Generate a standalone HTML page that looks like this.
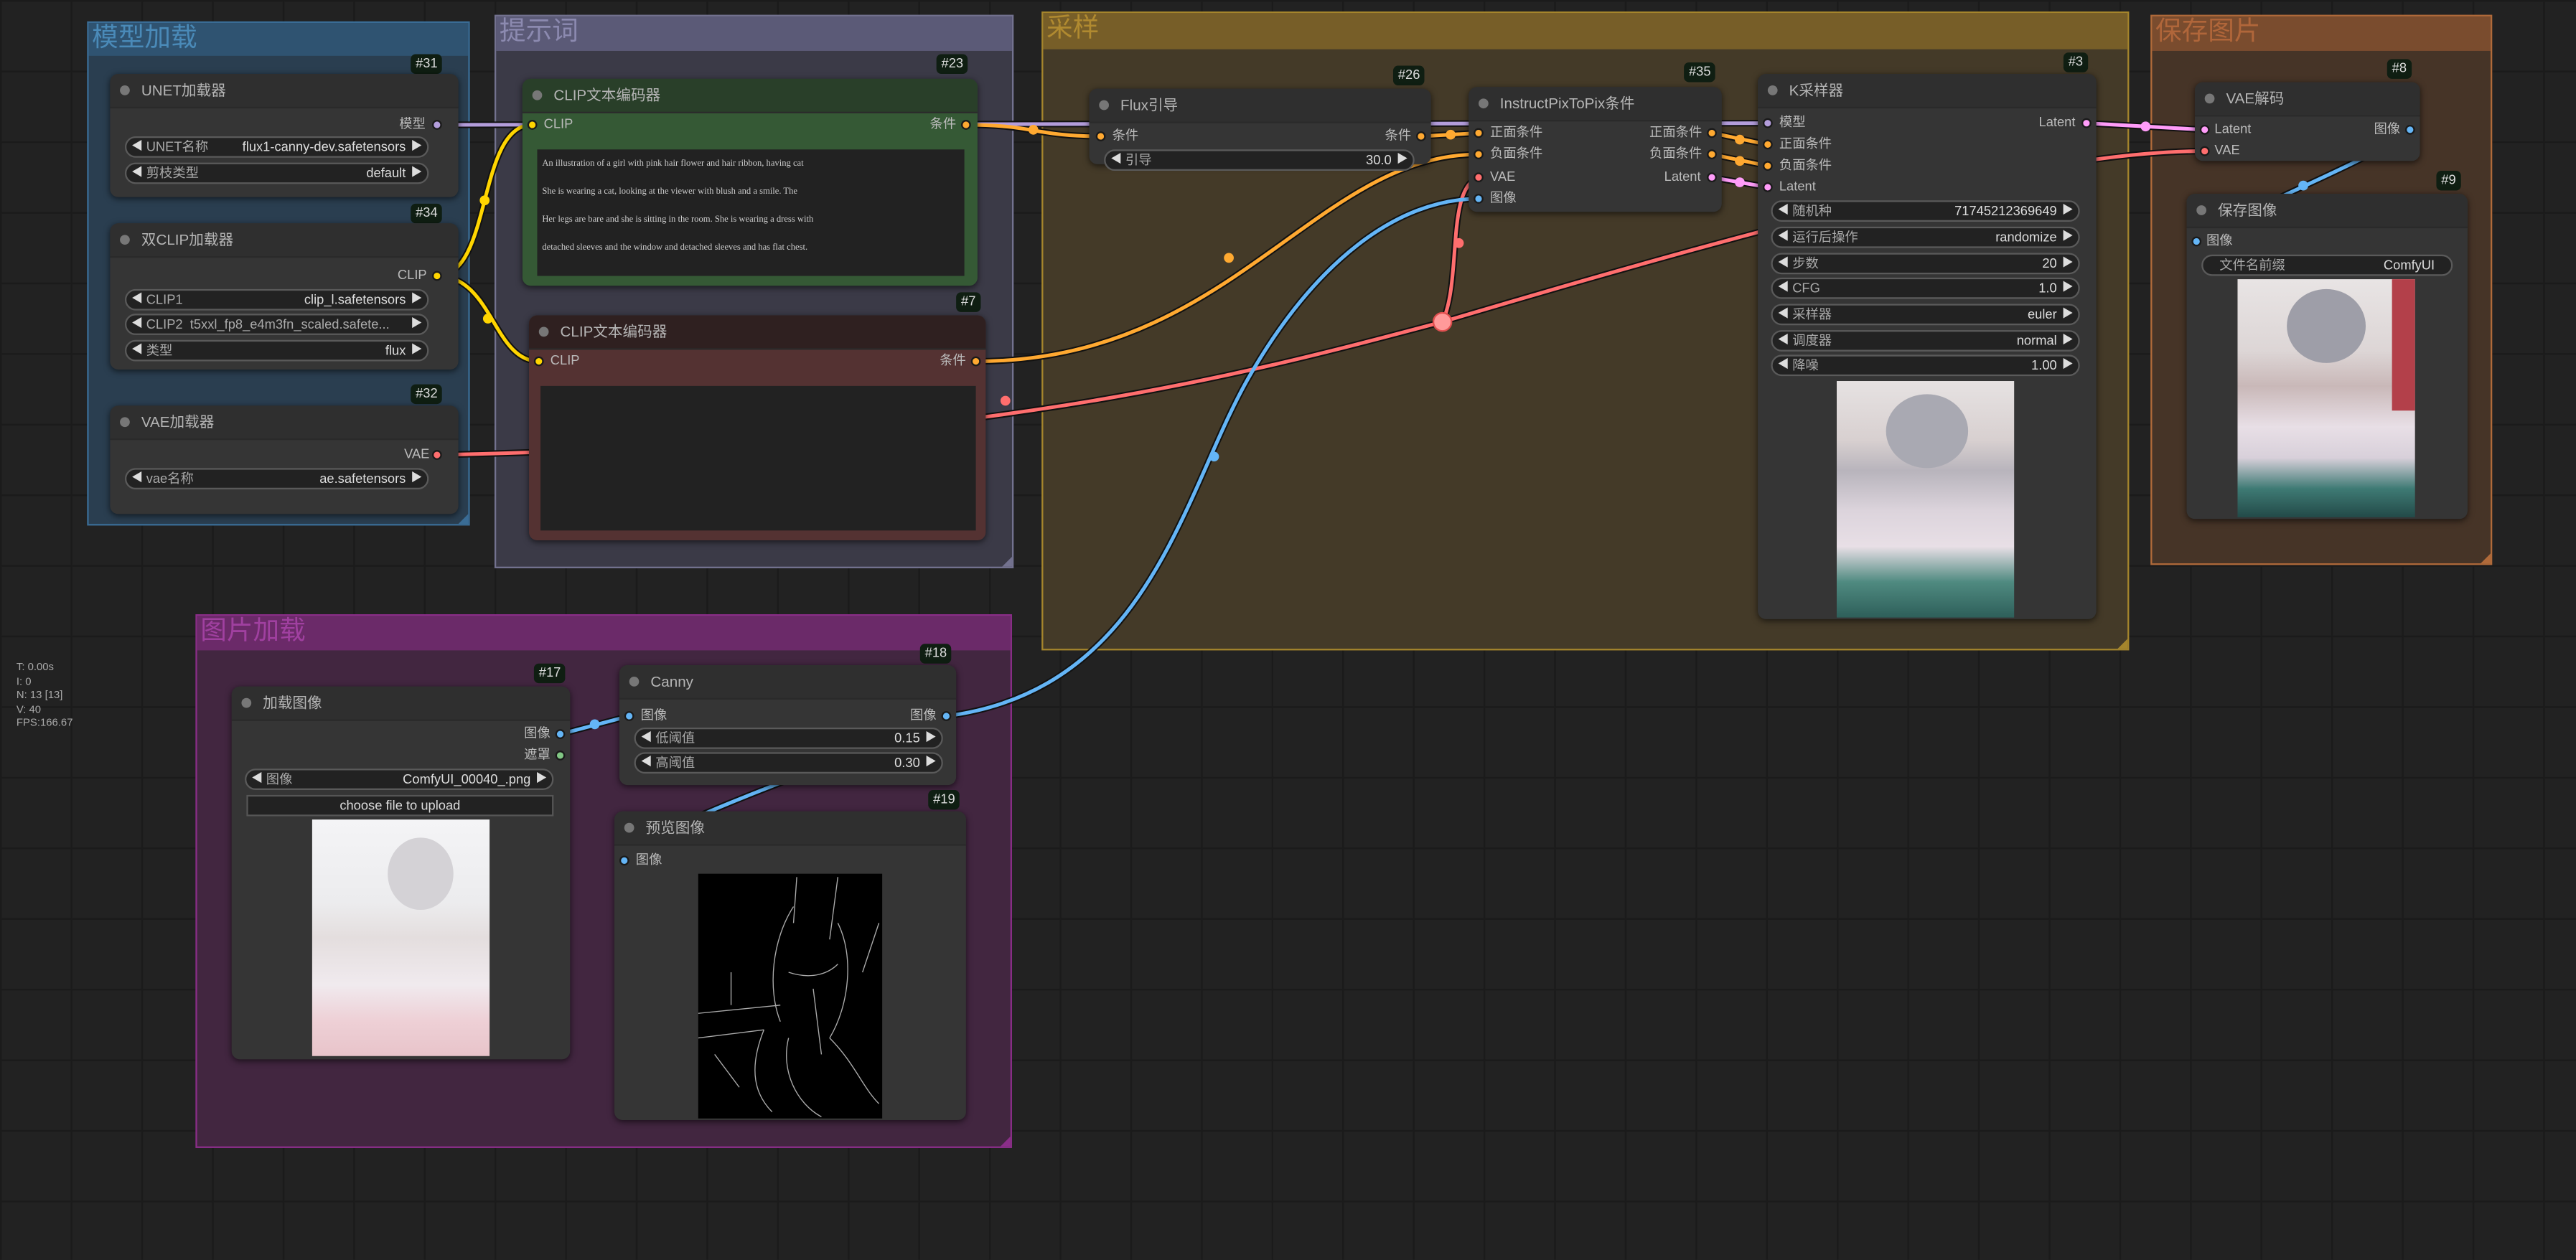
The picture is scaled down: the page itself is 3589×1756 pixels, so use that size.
<!DOCTYPE html>
<html><head><meta charset="utf-8"><style>
*{margin:0;padding:0;box-sizing:border-box}
html,body{width:3589px;height:1756px;overflow:hidden;background:#222}
#w{position:absolute;left:0;top:0;width:1568px;height:767px;transform:scale(2.2889);transform-origin:0 0;
font-family:"Liberation Sans","Noto Sans CJK SC",sans-serif;
background-color:#222;
background-image:linear-gradient(#1b1b1b 1px,transparent 1px),linear-gradient(90deg,#1b1b1b 1px,transparent 1px);
background-size:43px 43px;}
.g{position:absolute;border:1px solid}
.g .h{height:20px;font-size:16px;line-height:20px;padding-left:2px}
.g .c{position:absolute;right:0;bottom:0;width:0;height:0;border-style:solid;border-width:0 0 6px 6px}
.n{position:absolute;background:#353535;border-radius:5px;box-shadow:0 1px 4px rgba(0,0,0,.6)}
.t{height:21px;background:#2f2f2f;border-radius:5px 5px 0 0;color:#b5b5b5;font-size:9px;line-height:21px;padding-left:19px;position:relative;border-bottom:1px solid #2a2a2a}
.t:before{content:"";position:absolute;left:6px;top:7px;width:6px;height:6px;border-radius:50%;background:#777}
.b{position:absolute;background:#0f1e12;color:#ddd;font-size:8px;line-height:12px;height:12px;padding:0 3px;border-radius:3px;text-align:center}
.l{position:absolute;font-size:8px;color:#bbb;line-height:10px;white-space:nowrap}
.d{position:absolute;width:6px;height:6px;border-radius:50%;border:1px solid #1a1a1a}
.wd{position:absolute;height:13px;background:#222;border:1px solid #5a5a5a;border-radius:7px;font-size:8px;line-height:11px;color:#aaa}
.wd .a{position:absolute;left:3px;top:0;color:#ddd;font-size:7px}
.wd .z{position:absolute;right:3px;top:0;color:#ddd;font-size:7px}
.wd .k{position:absolute;left:12px;top:0;white-space:nowrap}
.wd .v{position:absolute;right:13px;top:0;color:#ddd;white-space:nowrap}
.ta{position:absolute;background:#222}
</style></head><body><div id="w">

<!-- groups -->
<div class="g" style="left:53px;top:13px;width:233px;height:307px;background:#2a3e50;border-color:#3a6c95"><div class="h" style="background:#2f5371;color:#4a8ab8">模型加载</div><div class="c" style="border-color:transparent transparent #3a6c95 transparent"></div></div>
<div class="g" style="left:301px;top:9px;width:316px;height:337px;background:#3b3a47;border-color:#73728f"><div class="h" style="background:#5b5a77;color:#8c8ab0;height:21px">提示词</div><div class="c" style="border-color:transparent transparent #73728f transparent"></div></div>
<div class="g" style="left:634px;top:7px;width:662px;height:389px;background:#443a28;border-color:#a5852c"><div class="h" style="background:#775e28;color:#b08a30;height:22px">采样</div><div class="c" style="border-color:transparent transparent #a5852c transparent"></div></div>
<div class="g" style="left:1309px;top:9px;width:208px;height:335px;background:#463427;border-color:#b06a3a"><div class="h" style="background:#7a4c2e;color:#b0663a;height:21px">保存图片</div><div class="c" style="border-color:transparent transparent #b06a3a transparent"></div></div>
<div class="g" style="left:119px;top:374px;width:497px;height:325px;background:#422640;border-color:#8a2e88"><div class="h" style="background:#6b2a69;color:#a040a0;height:21px">图片加载</div><div class="c" style="border-color:transparent transparent #8a2e88 transparent"></div></div>

<!-- wires -->
<svg style="position:absolute;left:0;top:0" width="1568" height="767" fill="none" stroke-linecap="round">
<g stroke="#111" stroke-width="4">
<path d="M266 76 L1076 75"/>
<path d="M266 168 C300 168 290 76 324 76"/><path d="M266 168 C300 168 300 220 328 220"/>
<path d="M588 76 C630 76 630 83 670 83"/><path d="M865 83 L900 81"/>
<path d="M594 220 C750 220 800 94 900 94"/>
<path d="M266 277 C600 270 750 230 878 196"/><path d="M878 196 C1100 130 1250 92 1342 92"/><path d="M878 196 C890 170 880 115 900 108"/>
<path d="M576 436 C700 420 720 300 760 230 C800 160 850 121 900 121"/>
<path d="M341 447 L383 436"/><path d="M576 436 C500 470 400 500 380 524"/>
<path d="M1467 79 C1440 100 1380 120 1337 147"/>
<path d="M1042 81 L1076 88"/><path d="M1042 94 L1076 101"/><path d="M1042 108 L1076 114"/><path d="M1270 75 L1342 79"/>
</g>
<g stroke-width="2.2">
<path stroke="#b39ddb" d="M266 76 L1076 75"/>
<path stroke="#ffd500" d="M266 168 C300 168 290 76 324 76"/><path stroke="#ffd500" d="M266 168 C300 168 300 220 328 220"/>
<path stroke="#ffa931" d="M588 76 C630 76 630 83 670 83"/><path stroke="#ffa931" d="M865 83 L900 81"/>
<path stroke="#ffa931" d="M594 220 C750 220 800 94 900 94"/>
<path stroke="#ff6e6e" d="M266 277 C600 270 750 230 878 196"/><path stroke="#ff6e6e" d="M878 196 C1100 130 1250 92 1342 92"/><path stroke="#ff6e6e" d="M878 196 C890 170 880 115 900 108"/>
<path stroke="#64b5f6" d="M576 436 C700 420 720 300 760 230 C800 160 850 121 900 121"/>
<path stroke="#64b5f6" d="M341 447 L383 436"/><path stroke="#64b5f6" d="M576 436 C500 470 400 500 380 524"/>
<path stroke="#64b5f6" d="M1467 79 C1440 100 1380 120 1337 147"/>
<path stroke="#ffa931" d="M1042 81 L1076 88"/><path stroke="#ffa931" d="M1042 94 L1076 101"/><path stroke="#ff9cf9" d="M1042 108 L1076 114"/><path stroke="#ff9cf9" d="M1270 75 L1342 79"/>
</g>
<g>
<circle cx="295" cy="122" r="3" fill="#ffd500"/><circle cx="297" cy="194" r="3" fill="#ffd500"/>
<circle cx="629" cy="79" r="3" fill="#ffa931"/><circle cx="883" cy="82" r="3" fill="#ffa931"/>
<circle cx="748" cy="157" r="3" fill="#ffa931"/><circle cx="612" cy="244" r="3" fill="#ff6e6e"/>
<circle cx="888" cy="148" r="3" fill="#ff6e6e"/><circle cx="878" cy="196" r="5.5" fill="#ff9a9a" stroke="#e05050"/>
<circle cx="739" cy="278" r="3" fill="#64b5f6"/><circle cx="362" cy="441" r="3" fill="#64b5f6"/>
<circle cx="1059" cy="85" r="3" fill="#ffa931"/><circle cx="1059" cy="98" r="3" fill="#ffa931"/><circle cx="1059" cy="111" r="3" fill="#ff9cf9"/>
<circle cx="1306" cy="77" r="3" fill="#ff9cf9"/><circle cx="1402" cy="113" r="3" fill="#64b5f6"/>
</g>
</svg>

<!-- stats -->
<div style="position:absolute;left:10px;top:403px;font-size:6.5px;line-height:8.5px;color:#aaa">T: 0.00s<br>I: 0<br>N: 13 [13]<br>V: 40<br>FPS:166.67</div>

<!-- #31 -->
<div class="b" style="left:250px;top:33px">#31</div>
<div class="n" style="left:67px;top:45px;width:212px;height:75px"><div class="t">UNET加载器</div></div>
<div class="l" style="left:243px;top:71px">模型</div><div class="d" style="left:263px;top:73px;background:#b39ddb"></div>
<div class="wd" style="left:76px;top:83px;width:185px"><span class="a">◀</span><span class="k">UNET名称</span><span class="v">flux1-canny-dev.safetensors</span><span class="z">▶</span></div>
<div class="wd" style="left:76px;top:99px;width:185px"><span class="a">◀</span><span class="k">剪枝类型</span><span class="v">default</span><span class="z">▶</span></div>
<!-- #34 -->
<div class="b" style="left:250px;top:124px">#34</div>
<div class="n" style="left:67px;top:136px;width:212px;height:89px"><div class="t">双CLIP加载器</div></div>
<div class="l" style="left:242px;top:163px">CLIP</div><div class="d" style="left:263px;top:165px;background:#ffd500"></div>
<div class="wd" style="left:76px;top:176px;width:185px"><span class="a">◀</span><span class="k">CLIP1</span><span class="v">clip_l.safetensors</span><span class="z">▶</span></div>
<div class="wd" style="left:76px;top:191px;width:185px"><span class="a">◀</span><span class="k">CLIP2 &nbsp;t5xxl_fp8_e4m3fn_scaled.safete...</span><span class="z">▶</span></div>
<div class="wd" style="left:76px;top:207px;width:185px"><span class="a">◀</span><span class="k">类型</span><span class="v">flux</span><span class="z">▶</span></div>
<!-- #32 -->
<div class="b" style="left:250px;top:234px">#32</div>
<div class="n" style="left:67px;top:247px;width:212px;height:66px"><div class="t">VAE加载器</div></div>
<div class="l" style="left:246px;top:272px">VAE</div><div class="d" style="left:263px;top:274px;background:#ff6e6e"></div>
<div class="wd" style="left:76px;top:285px;width:185px"><span class="a">◀</span><span class="k">vae名称</span><span class="v">ae.safetensors</span><span class="z">▶</span></div>

<!-- #23 -->
<div class="b" style="left:570px;top:33px">#23</div>
<div class="n" style="left:318px;top:48px;width:277px;height:126px;background:#355935"><div class="t" style="background:#293f29">CLIP文本编码器</div></div>
<div class="d" style="left:321px;top:73px;background:#ffd500"></div><div class="l" style="left:331px;top:71px">CLIP</div>
<div class="l" style="left:566px;top:71px">条件</div><div class="d" style="left:585px;top:73px;background:#ffa931"></div>
<div class="ta" style="left:327px;top:91px;width:260px;height:77px;font-family:'Liberation Serif',serif;font-size:5.5px;color:#ccc;line-height:17px;padding:1px 3px;overflow:hidden;white-space:nowrap">An illustration of a girl with pink hair flower and hair ribbon, having cat<br>She is wearing a cat, looking at the viewer with blush and a smile. The<br>Her legs are bare and she is sitting in the room. She is wearing a dress with<br>detached sleeves and the window and detached sleeves and has flat chest.</div>
<!-- #7 -->
<div class="b" style="left:582px;top:178px">#7</div>
<div class="n" style="left:322px;top:192px;width:278px;height:137px;background:#543232"><div class="t" style="background:#2f2020">CLIP文本编码器</div></div>
<div class="d" style="left:325px;top:217px;background:#ffd500"></div><div class="l" style="left:335px;top:215px">CLIP</div>
<div class="l" style="left:572px;top:215px">条件</div><div class="d" style="left:591px;top:217px;background:#ffa931"></div>
<div class="ta" style="left:329px;top:235px;width:265px;height:88px"></div>

<!-- #26 -->
<div class="b" style="left:848px;top:40px">#26</div>
<div class="n" style="left:663px;top:54px;width:208px;height:46px"><div class="t">Flux引导</div></div>
<div class="d" style="left:667px;top:80px;background:#ffa931"></div><div class="l" style="left:677px;top:78px">条件</div>
<div class="l" style="left:843px;top:78px">条件</div><div class="d" style="left:862px;top:80px;background:#ffa931"></div>
<div class="wd" style="left:672px;top:91px;width:189px"><span class="a">◀</span><span class="k">引导</span><span class="v">30.0</span><span class="z">▶</span></div>
<!-- #35 -->
<div class="b" style="left:1025px;top:38px">#35</div>
<div class="n" style="left:894px;top:53px;width:154px;height:76px"><div class="t">InstructPixToPix条件</div></div>
<div class="d" style="left:897px;top:78px;background:#ffa931"></div><div class="l" style="left:907px;top:76px">正面条件</div>
<div class="d" style="left:897px;top:91px;background:#ffa931"></div><div class="l" style="left:907px;top:89px">负面条件</div>
<div class="d" style="left:897px;top:105px;background:#ff6e6e"></div><div class="l" style="left:907px;top:103px">VAE</div>
<div class="d" style="left:897px;top:118px;background:#64b5f6"></div><div class="l" style="left:907px;top:116px">图像</div>
<div class="l" style="left:1004px;top:76px">正面条件</div><div class="d" style="left:1039px;top:78px;background:#ffa931"></div>
<div class="l" style="left:1004px;top:89px">负面条件</div><div class="d" style="left:1039px;top:91px;background:#ffa931"></div>
<div class="l" style="left:1013px;top:103px">Latent</div><div class="d" style="left:1039px;top:105px;background:#ff9cf9"></div>
<!-- #3 -->
<div class="b" style="left:1256px;top:32px">#3</div>
<div class="n" style="left:1070px;top:45px;width:206px;height:332px"><div class="t">K采样器</div></div>
<div class="d" style="left:1073px;top:72px;background:#b39ddb"></div><div class="l" style="left:1083px;top:70px">模型</div>
<div class="d" style="left:1073px;top:85px;background:#ffa931"></div><div class="l" style="left:1083px;top:83px">正面条件</div>
<div class="d" style="left:1073px;top:98px;background:#ffa931"></div><div class="l" style="left:1083px;top:96px">负面条件</div>
<div class="d" style="left:1073px;top:111px;background:#ff9cf9"></div><div class="l" style="left:1083px;top:109px">Latent</div>
<div class="l" style="left:1241px;top:70px">Latent</div><div class="d" style="left:1267px;top:72px;background:#ff9cf9"></div>
<div class="wd" style="left:1078px;top:122px;width:188px"><span class="a">◀</span><span class="k">随机种</span><span class="v">717452123696​49</span><span class="z">▶</span></div>
<div class="wd" style="left:1078px;top:138px;width:188px"><span class="a">◀</span><span class="k">运行后操作</span><span class="v">randomize</span><span class="z">▶</span></div>
<div class="wd" style="left:1078px;top:154px;width:188px"><span class="a">◀</span><span class="k">步数</span><span class="v">20</span><span class="z">▶</span></div>
<div class="wd" style="left:1078px;top:169px;width:188px"><span class="a">◀</span><span class="k">CFG</span><span class="v">1.0</span><span class="z">▶</span></div>
<div class="wd" style="left:1078px;top:185px;width:188px"><span class="a">◀</span><span class="k">采样器</span><span class="v">euler</span><span class="z">▶</span></div>
<div class="wd" style="left:1078px;top:201px;width:188px"><span class="a">◀</span><span class="k">调度器</span><span class="v">normal</span><span class="z">▶</span></div>
<div class="wd" style="left:1078px;top:216px;width:188px"><span class="a">◀</span><span class="k">降噪</span><span class="v">1.00</span><span class="z">▶</span></div>
<div style="position:absolute;left:1118px;top:232px;width:108px;height:144px;background:linear-gradient(180deg,#e6e2e2 0%,#d8d0d0 25%,#b8b4bc 38%,#dcd4dc 55%,#e8dfe6 70%,#4f8a80 85%,#2e5f5a 100%)"></div>
<div style="position:absolute;left:1148px;top:240px;width:50px;height:45px;border-radius:50%;background:#a9a9b2"></div>

<!-- #8 -->
<div class="b" style="left:1453px;top:36px">#8</div>
<div class="n" style="left:1336px;top:50px;width:137px;height:48px"><div class="t">VAE解码</div></div>
<div class="d" style="left:1339px;top:76px;background:#ff9cf9"></div><div class="l" style="left:1348px;top:74px">Latent</div>
<div class="d" style="left:1339px;top:89px;background:#ff6e6e"></div><div class="l" style="left:1348px;top:87px">VAE</div>
<div class="l" style="left:1445px;top:74px">图像</div><div class="d" style="left:1464px;top:76px;background:#64b5f6"></div>
<!-- #9 -->
<div class="b" style="left:1483px;top:104px">#9</div>
<div class="n" style="left:1331px;top:118px;width:171px;height:198px"><div class="t">保存图像</div></div>
<div class="d" style="left:1334px;top:144px;background:#64b5f6"></div><div class="l" style="left:1343px;top:142px">图像</div>
<div class="wd" style="left:1340px;top:155px;width:153px"><span class="k" style="left:10px">文件名前缀</span><span class="v" style="right:10px">ComfyUI</span></div>
<div style="position:absolute;left:1362px;top:170px;width:108px;height:145px;background:linear-gradient(180deg,#e8e4e4 0%,#ddd6d6 30%,#c9b8b8 45%,#e8dfe6 62%,#d8d0da 75%,#3e7a74 88%,#234a48 100%)"></div>
<div style="position:absolute;left:1392px;top:176px;width:48px;height:45px;border-radius:50%;background:#9e9ea8"></div>
<div style="position:absolute;left:1456px;top:170px;width:14px;height:80px;background:#b3404a"></div>

<!-- #17 -->
<div class="b" style="left:325px;top:404px">#17</div>
<div class="n" style="left:141px;top:418px;width:206px;height:227px"><div class="t">加载图像</div></div>
<div class="l" style="left:319px;top:442px">图像</div><div class="d" style="left:338px;top:444px;background:#64b5f6"></div>
<div class="l" style="left:319px;top:455px">遮罩</div><div class="d" style="left:338px;top:457px;background:#81c784"></div>
<div class="wd" style="left:149px;top:468px;width:188px"><span class="a">◀</span><span class="k">图像</span><span class="v">ComfyUI_00040_.png</span><span class="z">▶</span></div>
<div style="position:absolute;left:150px;top:484px;width:187px;height:13px;background:#222;border:1px solid #555;color:#ddd;font-size:8px;line-height:11px;text-align:center">choose file to upload</div>
<div style="position:absolute;left:190px;top:499px;width:108px;height:144px;background:linear-gradient(180deg,#f4f4f6 0%,#ececee 35%,#e4dede 50%,#f0eaee 70%,#eed0d6 85%,#e8c4ca 100%)"></div>
<div style="position:absolute;left:236px;top:510px;width:40px;height:44px;border-radius:50%;background:#d4d2d6"></div>

<!-- #18 -->
<div class="b" style="left:560px;top:392px">#18</div>
<div class="n" style="left:377px;top:405px;width:205px;height:73px"><div class="t">Canny</div></div>
<div class="d" style="left:380px;top:433px;background:#64b5f6"></div><div class="l" style="left:390px;top:431px">图像</div>
<div class="l" style="left:554px;top:431px">图像</div><div class="d" style="left:573px;top:433px;background:#64b5f6"></div>
<div class="wd" style="left:386px;top:443px;width:188px"><span class="a">◀</span><span class="k">低阈值</span><span class="v">0.15</span><span class="z">▶</span></div>
<div class="wd" style="left:386px;top:458px;width:188px"><span class="a">◀</span><span class="k">高阈值</span><span class="v">0.30</span><span class="z">▶</span></div>
<!-- #19 -->
<div class="b" style="left:565px;top:481px">#19</div>
<div class="n" style="left:374px;top:494px;width:214px;height:188px"><div class="t">预览图像</div></div>
<div class="d" style="left:377px;top:521px;background:#64b5f6"></div><div class="l" style="left:387px;top:519px">图像</div>
<svg style="position:absolute;left:425px;top:532px;background:#000" width="112" height="149" fill="none" stroke="#aaa" stroke-width="0.6">
<path d="M60 2 L58 30 M85 2 L80 40 M58 20 C45 40 42 70 50 90 M85 30 C95 50 92 80 80 100 M55 60 C70 65 80 60 85 55 M0 85 L50 80 M0 100 L40 95 M40 95 C30 120 35 135 45 145 M55 100 C50 120 60 140 75 148 M80 100 C95 115 100 130 110 140 M70 70 L75 110 M20 60 L20 80 M10 110 L25 130 M110 30 L100 60"/>
</svg>

</div></body></html>
